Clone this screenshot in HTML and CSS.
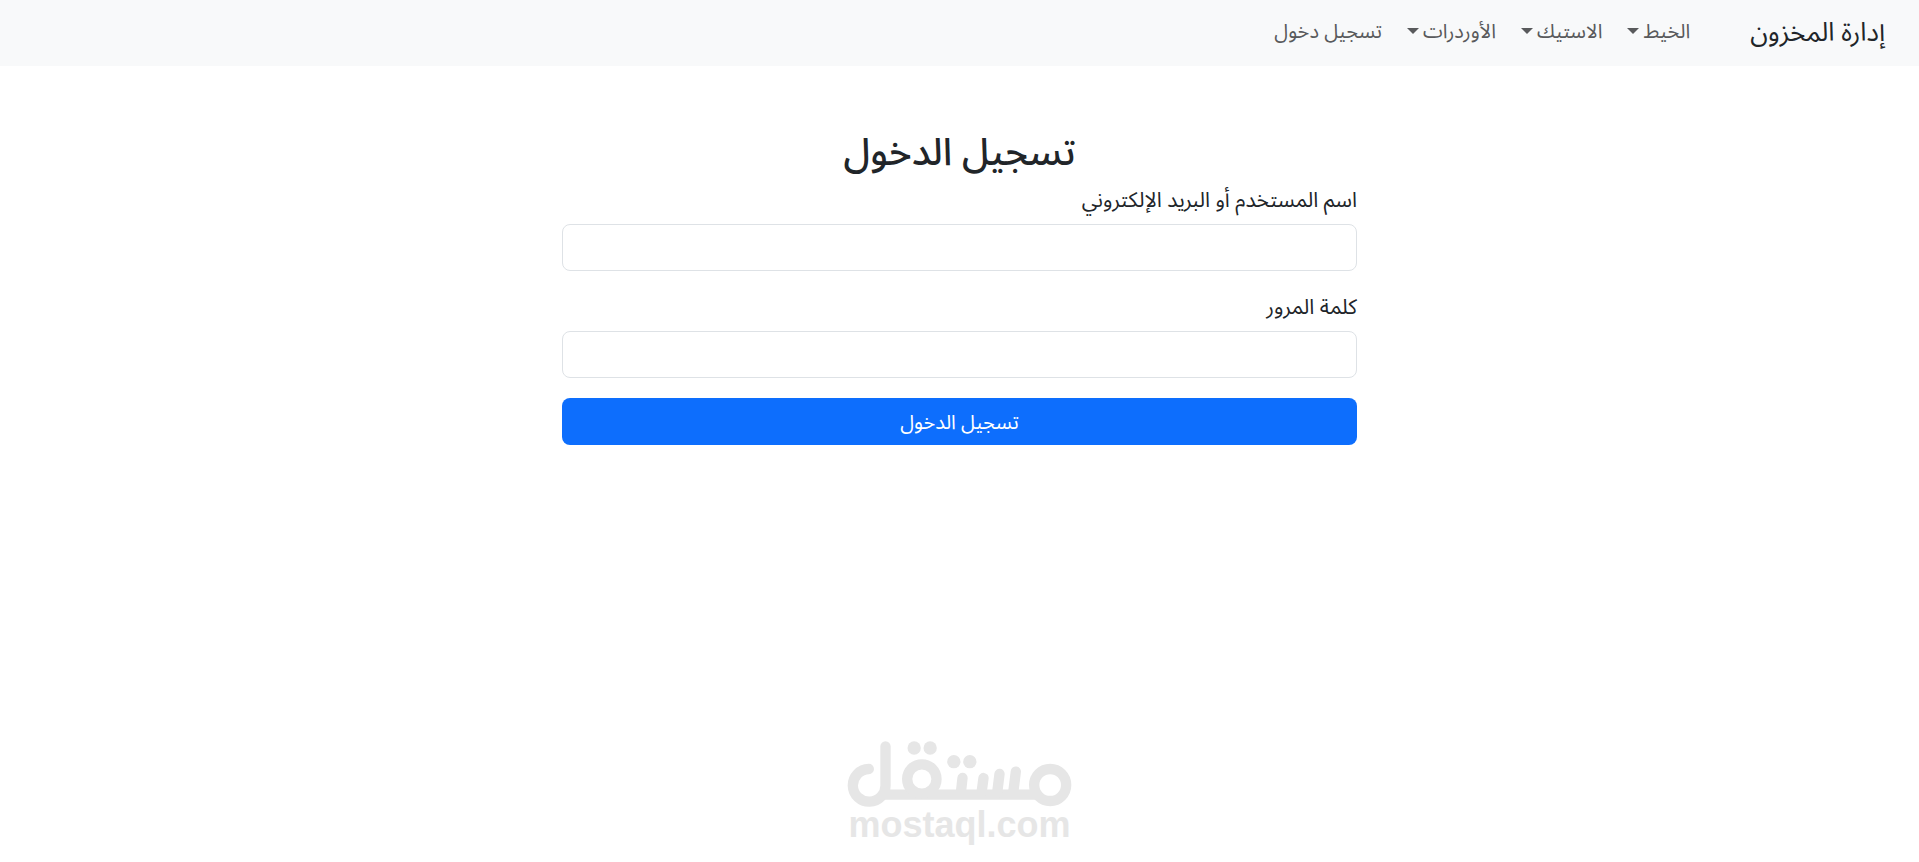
FILE: index.html
```html
<!DOCTYPE html>
<html lang="ar" dir="rtl">
<head>
<meta charset="utf-8">
<title>تسجيل الدخول</title>
<link rel="stylesheet" href="styles.css">
</head>
<body>
<nav class="navbar">
  <a class="brand" href="#">إدارة المخزون</a>
  <ul class="nav-list">
    <li><a class="nav-link dropdown" href="#">الخيط</a></li>
    <li><a class="nav-link dropdown" href="#">الاستيك</a></li>
    <li><a class="nav-link dropdown" href="#">الأوردرات</a></li>
    <li><a class="nav-link" href="#">تسجيل دخول</a></li>
  </ul>
</nav>
<main class="login">
  <h2 class="title">تسجيل الدخول</h2>
  <form>
    <div class="field">
      <label for="user">اسم المستخدم أو البريد الإلكتروني</label>
      <input class="control" type="text" id="user">
    </div>
    <div class="field">
      <label for="password">كلمة المرور</label>
      <input class="control" type="password" id="password">
    </div>
    <button class="submit" type="submit">تسجيل الدخول</button>
  </form>
</main>
<footer class="watermark" dir="ltr">
  <svg class="mark" viewBox="50 66 674 198" role="img" aria-label="مستقل">
    <g fill="none" stroke="currentColor" stroke-width="31" stroke-linecap="round">
      <path d="M165 82V197A49 49 0 1 1 115 150"/>
      <path d="M150 227H622" stroke-linecap="butt"/>
      <circle cx="274" cy="180" r="44"/>
      <path d="M396 177L391 222M459 177L453 222M507 165L500 222M556 158L548 222"/>
      <circle cx="659" cy="198" r="48"/>
    </g>
    <g fill="currentColor">
      <circle cx="251" cy="87" r="20"/>
      <circle cx="299" cy="87" r="20"/>
      <circle cx="370" cy="128" r="20"/>
      <circle cx="418" cy="128" r="20"/>
    </g>
  </svg>
  <span class="domain">mostaql.com</span>
</footer>
</body>
</html>
```
FILE: styles.css
```css
* { box-sizing: border-box; }

body {
  margin: 0;
  min-height: 100vh;
  display: flex;
  flex-direction: column;
  background: #fff;
  color: #212529;
  font-family: "Noto Sans", "Noto Sans Arabic", "DejaVu Sans", sans-serif;
  font-size: 20px;
  line-height: 30px;
}

.navbar {
  display: flex;
  align-items: center;
  gap: 50px;
  min-height: 66px;
  padding: 6px 34px 10px;
  background: #f8f9fa;
}

.brand {
  color: #212529;
  font-size: 26px;
  text-decoration: none;
}

.nav-list {
  display: flex;
  gap: 5px;
  margin: 0;
  padding: 0;
  list-style: none;
}

.nav-link {
  display: block;
  padding: 10px;
  color: #595a5c;
  text-decoration: none;
}

.dropdown::after {
  content: "";
  display: inline-block;
  margin-right: 4px;
  vertical-align: 4px;
  border: 6px solid transparent;
  border-top-color: currentColor;
  border-bottom: 0;
}

.login {
  width: 100%;
  max-width: 795px;
  margin: 60px auto 0;
}

.title {
  margin: 0 0 10px;
  font-size: 38px;
  font-weight: 500;
  line-height: 48px;
  text-align: center;
}

.field { margin-bottom: 20px; }

.field label {
  display: block;
  margin-bottom: 10px;
  font-size: 21px;
}

.control {
  display: block;
  width: 100%;
  height: 47px;
  padding: 8px 15px;
  border: 1px solid #dee2e6;
  border-radius: 8px;
  background: #fff;
  font: inherit;
}

.submit {
  display: block;
  width: 100%;
  height: 47px;
  border: 0;
  border-radius: 8px;
  background: #0d6efd;
  color: #fff;
  font: inherit;
}

.watermark {
  display: flex;
  flex-direction: column;
  align-items: center;
  margin-top: auto;
  padding-bottom: 20px;
  color: #e6e6e6;
}

.mark { width: 225px; height: 66px; }

.domain {
  font-family: "Liberation Sans", Arial, sans-serif;
  font-size: 36px;
  font-weight: 700;
  line-height: 35px;
}
```
